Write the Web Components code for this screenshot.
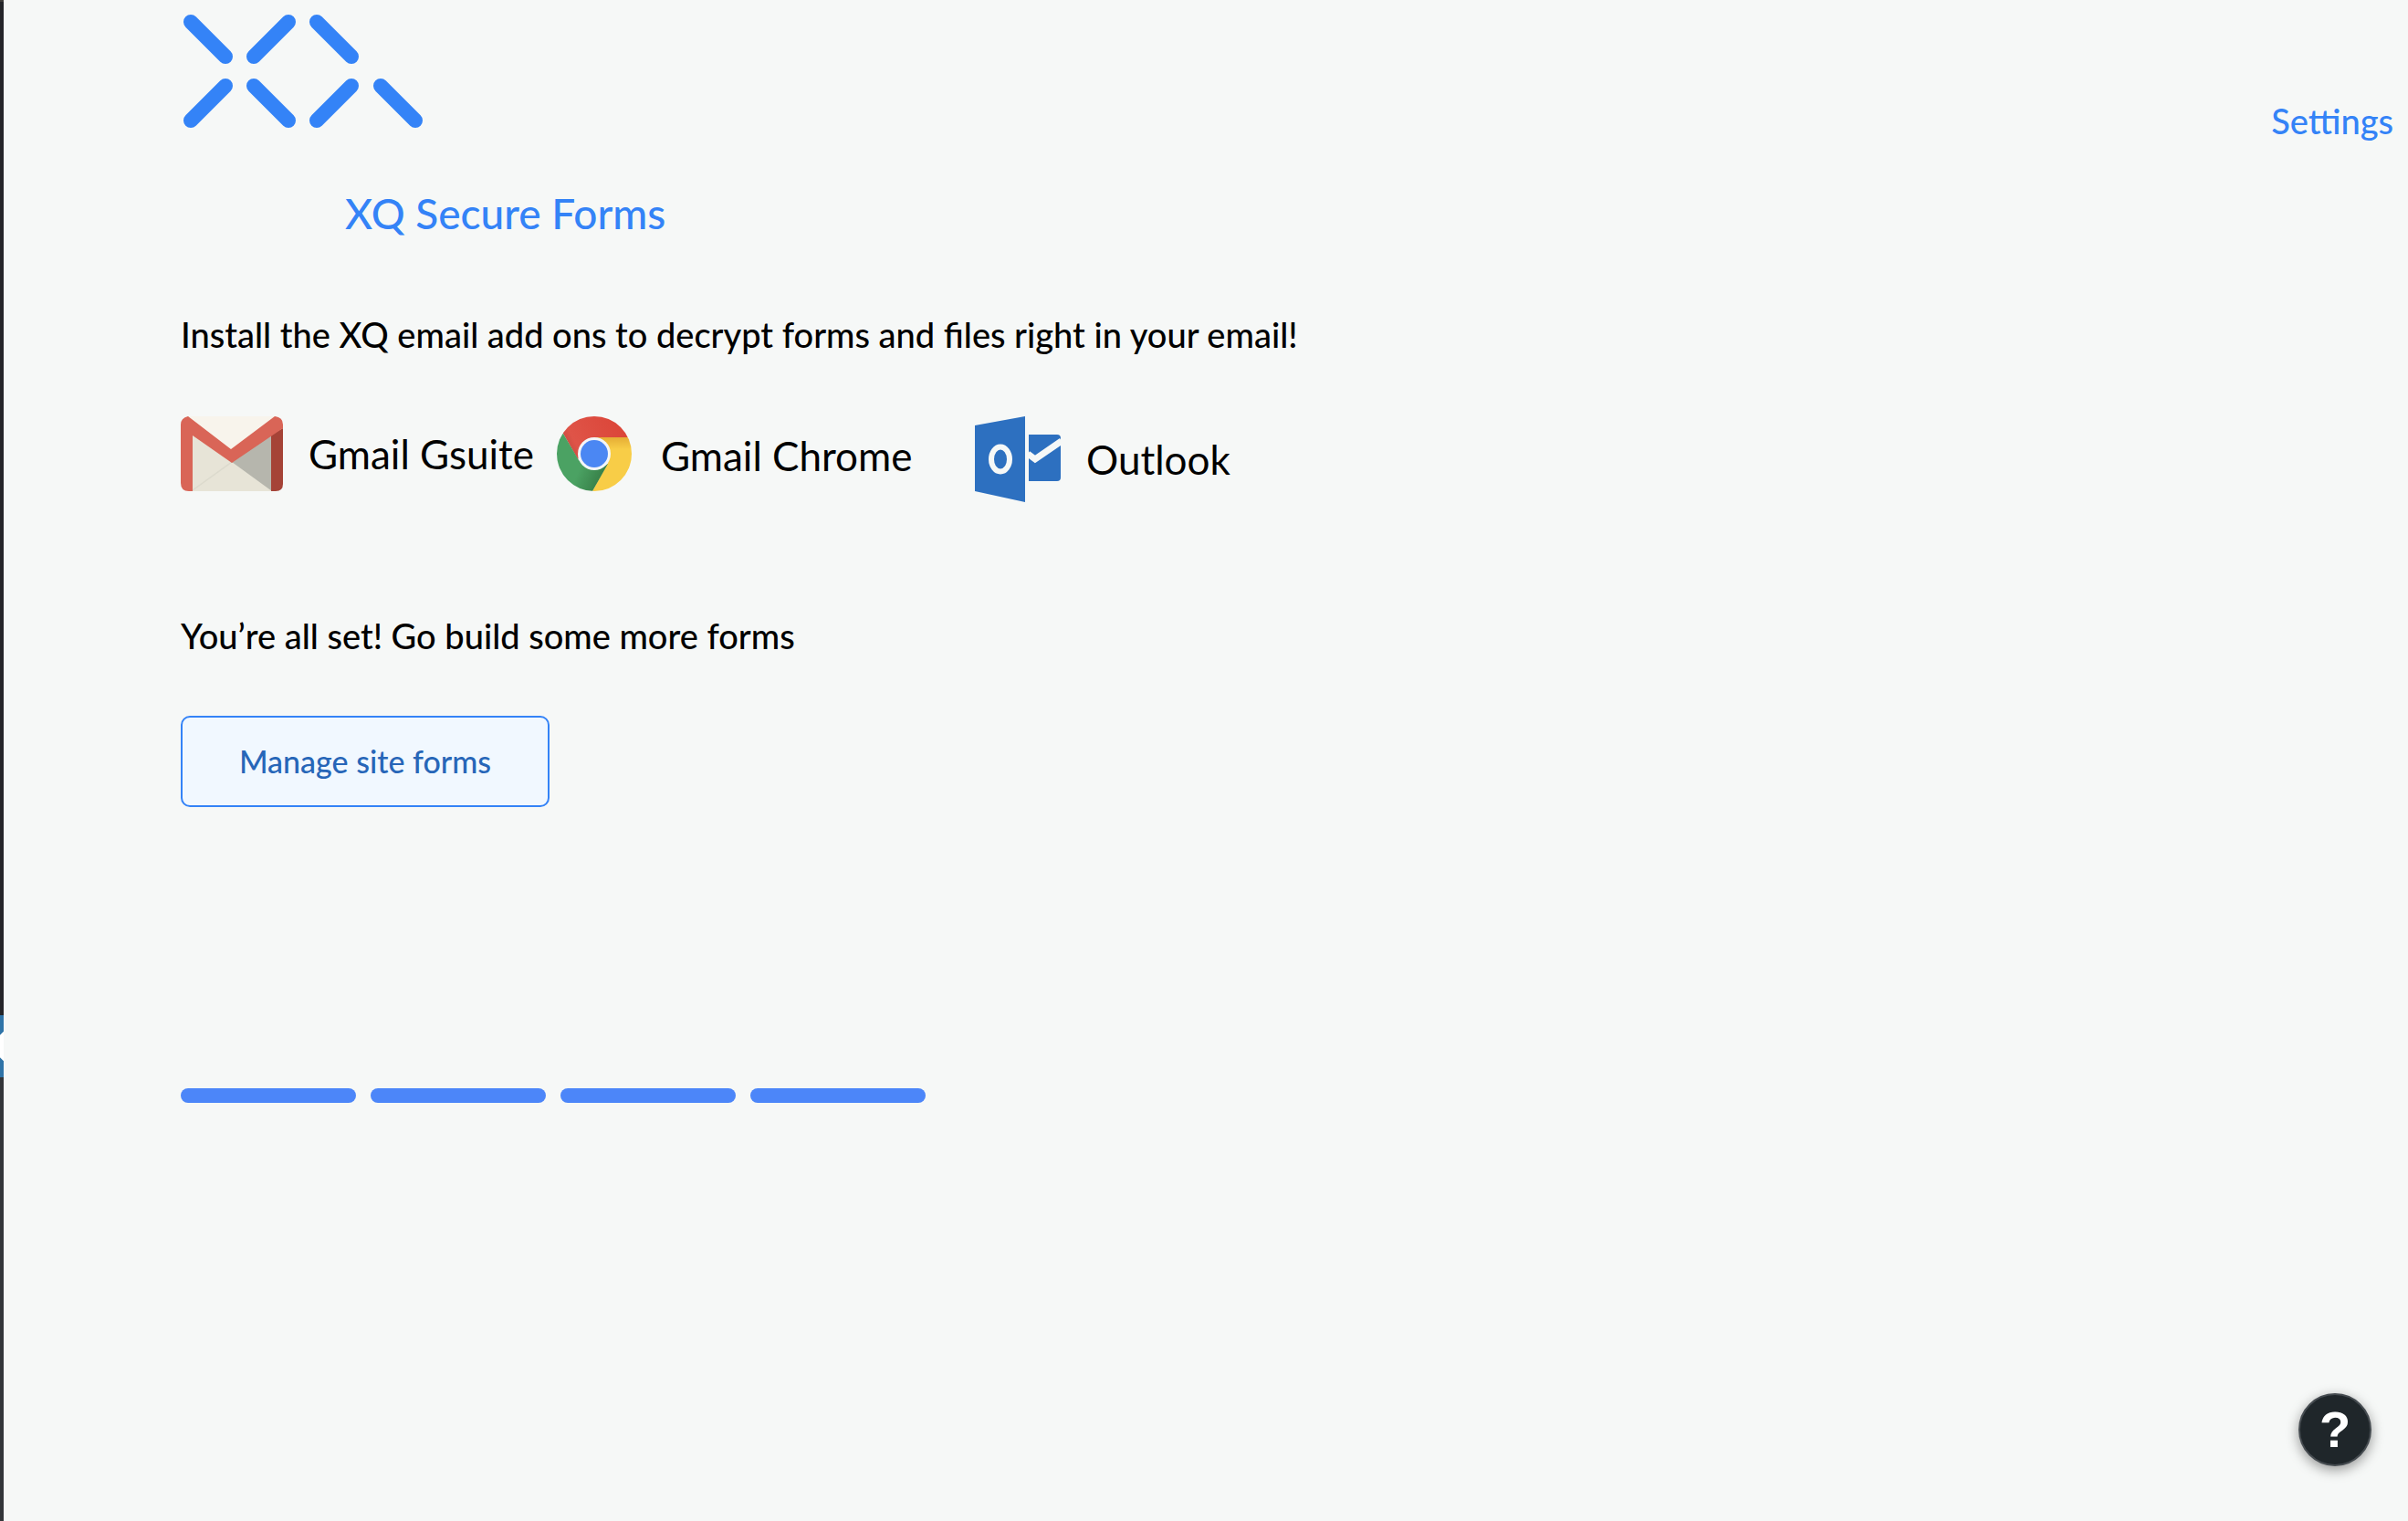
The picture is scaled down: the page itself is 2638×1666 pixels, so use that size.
<!DOCTYPE html>
<html lang="en">
<head>
<meta charset="utf-8">
<title>XQ Secure Forms</title>
<style>
body { margin: 0; background: #f6f8f7; color: #000; font-family: Lato, "Open Sans", sans-serif; }
</style>
</head>
<body>
<xq-page></xq-page>
<script>
const define = (name, html) => customElements.define(name, class extends HTMLElement {
  constructor() {
    super();
    this.attachShadow({ mode: "open" }).innerHTML = html;
  }
});

define("xq-logo", `
<style>:host { display: block; } svg { display: block; }</style>
<svg width="268" height="148" viewBox="198 0 268 148" role="img" aria-label="XQ" fill="none" stroke="#3483f7" stroke-width="16" stroke-linecap="round">
  <path d="M209 24L247 62M316 24L278 62M347 24L385 62M247 94L209 132M278 94L316 132M385 94L347 132M417 94L455 132"/>
</svg>`);

define("xq-gmail-icon", `
<style>:host { display: block; flex: none; } svg { display: block; }</style>
<svg width="112" height="82" viewBox="0 0 112 82" aria-hidden="true">
  <path d="M7 0H105V82H7Z" fill="#e7e4d7"/>
  <path d="M8 0H104L56 38Z" fill="#f8f4ec"/>
  <path d="M56 50L100 20V82Z" fill="#b6b6ad"/>
  <path d="M13 81L56 50" stroke="#dcdacd" stroke-width="1.5"/>
  <path d="M99 20L112 13V74Q112 82 104 82H99Z" fill="#a54337"/>
  <path d="M8 0L55 36L103 0Q112 1 112 9V13L56 51L13 21V82H9Q0 82 0 73V9Q0 2 8 0Z" fill="#d96557"/>
</svg>`);

define("xq-chrome-icon", `
<style>:host { display: block; flex: none; } svg { display: block; }</style>
<svg width="86" height="86" viewBox="0 0 86 86" aria-hidden="true">
  <defs>
    <clipPath id="disc"><circle cx="41" cy="41" r="41"/></clipPath>
    <linearGradient id="red" x1="0" y1=".7" x2="1" y2=".4"><stop offset="0" stop-color="#b8443a"/><stop offset=".25" stop-color="#df5448"/><stop offset="1" stop-color="#db4437"/></linearGradient>
    <linearGradient id="yellow" x1="0" y1="0" x2="0" y2="1"><stop offset="0" stop-color="#e5ad35"/><stop offset=".22" stop-color="#f8cd47"/></linearGradient>
    <linearGradient id="green" x1="0" y1="0" x2="1" y2=".5"><stop offset=".6" stop-color="#4ba263"/><stop offset="1" stop-color="#388149"/></linearGradient>
  </defs>
  <g clip-path="url(#disc)">
    <path d="M0 0H82V23H41L23 47L7 19Z" fill="url(#red)"/>
    <path d="M41 23H82V82H39L56 51Z" fill="url(#yellow)"/>
    <path d="M7 19L24 48L41 59L56 52L39 82H0V19Z" fill="url(#green)"/>
  </g>
  <circle cx="41" cy="41" r="18" fill="#f4f6f8"/>
  <circle cx="41" cy="41" r="15" fill="#4b87f3"/>
</svg>`);

define("xq-outlook-icon", `
<style>:host { display: block; flex: none; } svg { display: block; }</style>
<svg width="94" height="94" viewBox="0 0 94 94" aria-hidden="true">
  <path d="M0 10L55 0V94L0 82Z" fill="#2d70c0"/>
  <ellipse cx="28" cy="47" rx="10" ry="13.500" fill="none" stroke="#f6f8f7" stroke-width="6"/>
  <path d="M59 20H90Q94 20 94 24V67Q94 71 90 71H59Z" fill="#2d70c0"/>
  <path d="M58 41L66 47L95 27" fill="none" stroke="#f6f8f7" stroke-width="7"/>
</svg>`);

define("xq-addon", `
<style>
:host { display: block; }
a { display: flex; align-items: center; gap: 28px; color: inherit; text-decoration: none; font-size: 44px; line-height: 56px; white-space: nowrap; }
</style>
<a href="#"><slot name="icon"></slot><slot></slot></a>`);

define("xq-button", `
<style>
:host { display: block; }
button { box-sizing: border-box; height: 100px; padding: 0 60px; border: 2px solid #3483f7; border-radius: 10px; background: #f1f8ff; color: #2766b8; font: 500 34px/40px Lato, sans-serif; min-width: 404px; cursor: pointer; }
</style>
<button type="button"><slot></slot></button>`);

define("xq-steps", `
<style>
:host { display: flex; gap: 16px; }
span { width: 192px; height: 16px; border-radius: 8px; background: #4c86f9; }
</style>
<span></span><span></span><span></span><span></span>`);

define("xq-edge", `
<style>
:host { display: block; }
svg { display: block; }
</style>
<svg width="4" height="1666" viewBox="0 0 4 1666" aria-hidden="true">
  <path d="M0 0H4V1112H0Z" fill="#242529"/>
  <path d="M0 0H4V2H0Z" fill="#403d3a"/>
  <path d="M0 1112H4V1130L0 1134ZM0 1158L4 1162V1180H0Z" fill="#2f74a8"/>
  <path d="M0 1134L4 1130V1162L0 1158Z" fill="#fff"/>
  <path d="M0 1180H4V1666H0Z" fill="#333539"/>
</svg>`);

define("xq-help", `
<style>
:host { position: fixed; right: 40px; bottom: 60px; }
button { box-sizing: border-box; display: flex; align-items: center; justify-content: center; width: 80px; height: 80px; padding: 0; border: 2px solid #454b50; border-radius: 50%; background: #1f262a; color: #fff; font: bold 56px/64px "Liberation Sans", sans-serif; box-shadow: 0 4px 14px rgba(0, 0, 0, .4); cursor: pointer; }
</style>
<button type="button" aria-label="Help">?</button>`);

define("xq-page", `
<style>
:host { display: flex; min-height: 100vh; overflow: hidden; }
xq-edge { flex: none; height: 100vh; overflow: hidden; }
.content { flex: 1; padding: 0 16px 0 194px; }
header { display: flex; justify-content: space-between; align-items: flex-end; height: 156px; }
xq-logo { align-self: flex-start; }
header a { color: #3483f7; text-decoration: none; font-size: 38px; font-weight: 500; line-height: 48px; }
h1 { margin: 48px 0 0 180px; color: #3483f7; font-size: 46px; font-weight: 500; line-height: 60px; }
p { margin: 0; font-size: 38px; font-weight: 500; line-height: 48px; }
.install { margin-top: 78px; }
.addons { display: grid; grid-template-columns: 412px 458px auto; align-items: start; margin-top: 66px; }
.done { margin-top: 122px; }
xq-button { margin-top: 64px; }
xq-steps { margin-top: 308px; }
</style>
<xq-edge></xq-edge>
<div class="content">
  <header><xq-logo></xq-logo><a href="#">Settings</a></header>
  <main>
    <h1>XQ Secure Forms</h1>
    <p class="install">Install the XQ email add ons to decrypt forms and files right in your email!</p>
    <div class="addons">
      <xq-addon><xq-gmail-icon slot="icon"></xq-gmail-icon>Gmail Gsuite</xq-addon>
      <xq-addon><xq-chrome-icon slot="icon"></xq-chrome-icon>Gmail Chrome</xq-addon>
      <xq-addon><xq-outlook-icon slot="icon"></xq-outlook-icon>Outlook</xq-addon>
    </div>
    <p class="done">You’re all set! Go build some more forms</p>
    <xq-button>Manage site forms</xq-button>
    <xq-steps></xq-steps>
  </main>
</div>
<xq-help></xq-help>`);
</script>
</body>
</html>
